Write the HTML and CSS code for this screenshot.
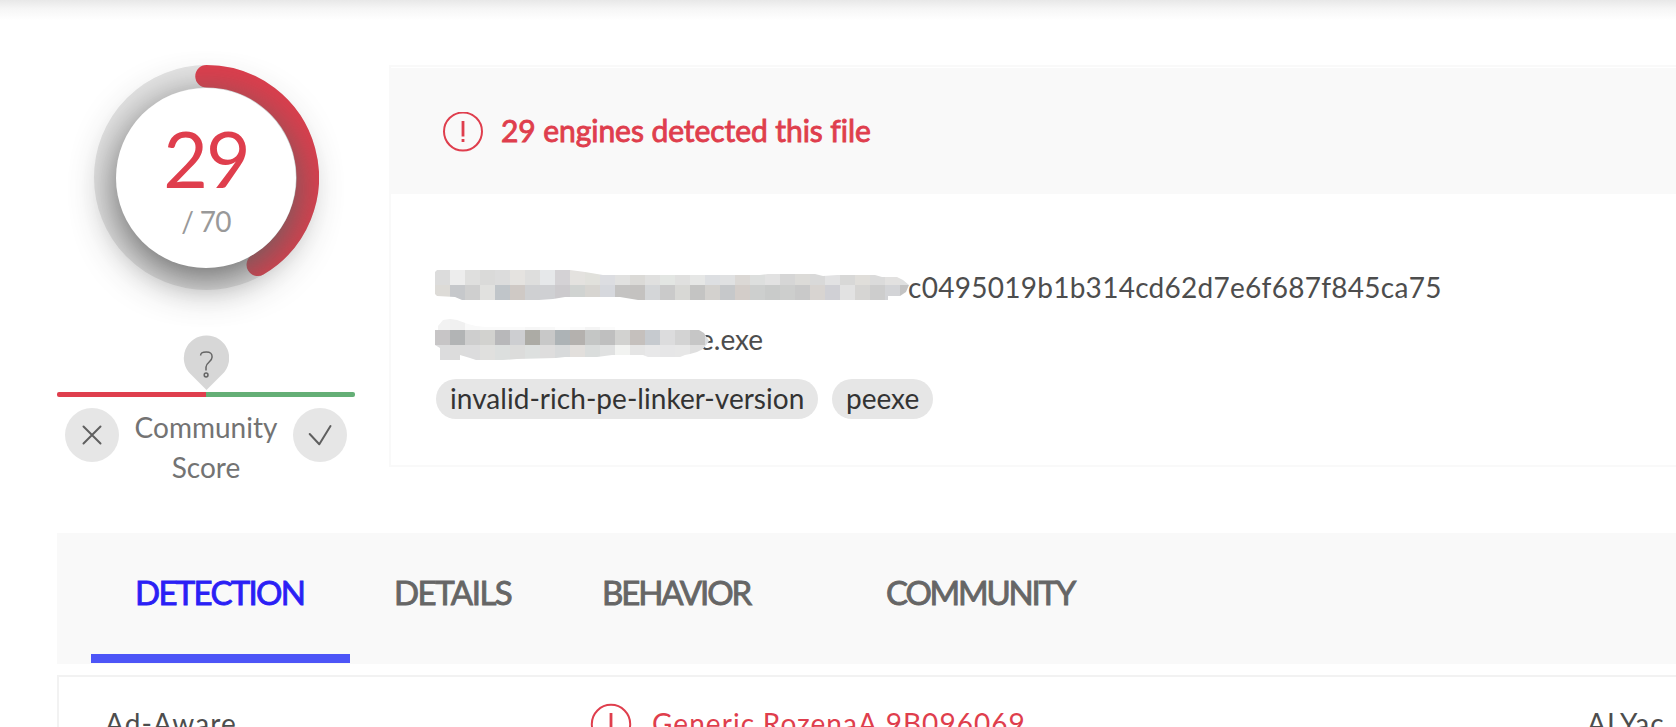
FILE: index.html
```
<!DOCTYPE html>
<html lang="en">
<head>
<meta charset="utf-8">
<title>File report</title>
<link rel="stylesheet" href="styles.css">
</head>
<body>
<div class="top-shade"></div>
<main class="page">
  <section class="summary">
    <aside class="score">
      <div class="gauge">
        <svg class="ring" width="225" height="225" viewBox="0 0 225 225">
          <circle cx="112.5" cy="112.5" r="101.25" fill="none" stroke="#e6e6e6" stroke-width="22.5"/>
          <path d="M112.5 11.25A101.25 101.25 0 0 1 163.8 199.8" fill="none" stroke="#df3e4d" stroke-width="22.5" stroke-linecap="round"/>
        </svg>
        <div class="dial">
          <span class="positives">29</span>
          <span class="total">/ 70</span>
        </div>
      </div>
      <svg class="pin" width="46" height="56" viewBox="0 0 46 56">
        <path d="M23.500 .5A22.500 22.500 0 0 1 39.500 39L23.500 55L7.500 39A22.500 22.500 0 0 1 23.500 .5Z" fill="#d7d7d7"/>
        <path d="M17.600 20.500C17.600 18 18.800 17 23.300 17C27.800 17 29.100 18.500 29.100 22C29.100 27 23 27.500 23 32V35.500" fill="none" stroke="#666" stroke-width="1.500"/>
        <circle cx="23.100" cy="40" r="1.900" fill="none" stroke="#666" stroke-width="1.500"/>
      </svg>
      <div class="bar"><span class="bad"></span><span class="good"></span></div>
      <div class="votes">
        <span class="vote"><svg width="54" height="54" viewBox="0 0 54 54"><path d="M18.500 18.500L35.500 35.500M35.500 18.500L18.500 35.500" fill="none" stroke="#5f5f5f" stroke-width="2" stroke-linecap="round"/></svg></span>
        <span class="votes-label">Community<br>Score</span>
        <span class="vote"><svg width="54" height="54" viewBox="0 0 54 54"><path d="M16.700 26L26.300 36.300L37.500 18" fill="none" stroke="#5f5f5f" stroke-width="2" stroke-linecap="round" stroke-linejoin="round"/></svg></span>
      </div>
    </aside>
    <article class="card">
      <header class="verdict">
        <svg width="40" height="40" viewBox="0 0 40 40"><circle cx="20" cy="19.500" r="19" fill="none" stroke="#df3e4d" stroke-width="2"/><path d="M20 9V24.500M20 27V30" fill="none" stroke="#df3e4d" stroke-width="2.800"/></svg>
        <span class="verdict-text">29 engines detected this file</span>
      </header>
      <div class="file">
        <div class="line"><span class="hash">c0495019b1b314cd62d7e6f687f845ca75</span>
          <svg class="mosaic" width="476" height="30" viewBox="0 0 476 30" shape-rendering="crispEdges">
            <clipPath id="m1"><path d="M0 2L2 0H135L150 2L168 5H325L333 4H380L388 6L402 5H440L447 7H462L468 10L474 15L471 22L465 26H453V30H203L185 27H130L118 29L104 30H27L20 27L2 26L0 24Z"/></clipPath>
            <g id="hash-mask" clip-path="url(#m1)"></g>
          </svg>
        </div>
        <div class="line"><span class="name">e.exe</span>
          <svg class="mosaic mosaic-name" width="276" height="46" viewBox="0 0 276 46" shape-rendering="crispEdges">
            <clipPath id="m2"><path d="M0 15H3V11L8 5L15 4L22 5L33 9L41 11L50 12H180V15H264L269 18L274 26L272 29L268 34L262 37L255 39L250 40L245 42H213L208 40H177L162 42H130L121 43L82 44L68 45H41L35 43L25 40V45H5V33L0 30Z"/></clipPath>
            <g id="name-mask" clip-path="url(#m2)"></g>
          </svg>
        </div>
        <div class="tags"><span class="tag tag-linker">invalid-rich-pe-linker-version</span><span class="tag tag-pe">peexe</span></div>
      </div>
    </article>
  </section>
  <nav class="tabs">
    <a class="tab active">DETECTION</a>
    <a class="tab details">DETAILS</a>
    <a class="tab behavior">BEHAVIOR</a>
    <a class="tab community">COMMUNITY</a>
  </nav>
  <section class="results">
    <span class="engine">Ad-Aware</span>
    <svg class="alert" width="42" height="42" viewBox="0 0 42 42"><circle cx="21" cy="21" r="19.200" fill="none" stroke="#df3e4d" stroke-width="2"/><path d="M21 10V26M21 28.500V31.500" fill="none" stroke="#df3e4d" stroke-width="2.800"/></svg>
    <span class="threat">Generic.RozenaA.9B096069</span>
    <span class="engine second">ALYac</span>
  </section>
</main>
<script src="mosaic.js"></script>
</body>
</html>
```
FILE: styles.css
```
* { box-sizing: border-box; }
body {
  margin: 0;
  height: 727px;
  overflow: hidden;
  background: #fff;
  color: #4d4d4d;
  font-family: Lato, "Open Sans", sans-serif;
  font-size: 28px;
}
svg { display: block; flex: none; }
.top-shade { height: 20px; background: linear-gradient(#e8e8e8, #f6f6f6 45%, #fff); }
.page { padding: 45px 0 0 57px; height: 707px; overflow: hidden; }
.summary { display: flex; height: 468px; }
.score { width: 298px; margin-right: 34px; display: flex; flex-direction: column; align-items: center; }
.gauge { display: grid; place-items: center; width: 225px; height: 225px; }
.ring, .dial { grid-area: 1 / 1; }
.dial {
  width: 180px;
  height: 180px;
  border-radius: 50%;
  background: #fff;
  box-shadow: 0 11px 42px rgb(100, 100, 100), 0 11px 70px rgba(0, 0, 0, .06);
  display: flex;
  flex-direction: column;
  align-items: center;
}
.positives { margin-top: 34px; font-size: 77px; line-height: 72px; color: #df3e4d; letter-spacing: -2px; }
.total { line-height: 34px; color: #999; font-size: 28px; margin-top: 10px; letter-spacing: -.7px; }
.pin { margin-top: 45px; }
.bar { display: flex; width: 298px; height: 5px; margin-top: 1px; border-radius: 2px; overflow: hidden; }
.bad, .good { flex: 1; background: #df3e4d; }
.good { background: #64af76; }
.votes { display: flex; width: 282px; margin-top: 11px; justify-content: space-between; }
.vote { width: 54px; height: 54px; border-radius: 50%; background: #e6e6e6; }
.votes-label { margin-top: -1px; color: #737373; line-height: 40px; text-align: center; font-size: 28px; }
.card { flex: 1; height: 402px; border: 2px solid #f9f9f9; border-right: 0; }
.verdict { display: flex; align-items: center; height: 126px; margin-top: 1px; padding: 2px 0 0 52px; background: #f9f9f9; color: #df3e4d; }
.verdict-text { margin: -5px 0 0 18px; font-size: 30px; line-height: 36px; letter-spacing: -.06px; -webkit-text-stroke: .9px #df3e4d; }
.file { padding: 66px 0 0 44px; }
.line { position: relative; height: 52px; line-height: 54px; white-space: nowrap; }
.hash { margin-left: 473px; letter-spacing: .27px; }
.name { margin-left: 264px; }
.mosaic { position: absolute; left: 0; top: 10px; }
.mosaic-name { top: 3px; }
.tags { display: flex; gap: 14px; margin: 15px 0 0 1px; }
.tag { height: 40px; padding-left: 14px; border-radius: 20px; background: #e6e6e6; color: #333; line-height: 38px; white-space: nowrap; }
.tag-linker { width: 382px; letter-spacing: .04px; }
.tag-pe { width: 101px; }
.tabs { display: flex; height: 131px; padding-left: 34px; background: #f9f9f9; font-size: 33px; letter-spacing: -1.7px; -webkit-text-stroke: .9px; color: #666; }
.tab { display: block; flex: none; height: 130px; line-height: 119px; white-space: nowrap; }
.tab.active { width: 259px; padding-left: 44px; color: #2b1ff5; border-bottom: 9px solid #4d55f7; }
.details { width: 252px; padding-left: 44px; letter-spacing: -1.5px; }
.behavior { width: 284px; letter-spacing: -2.1px; }
.community { letter-spacing: -2.2px; }
.results { display: flex; height: 200px; margin-top: 11px; padding: 26px 0 0 46px; border: 2px solid #f2f2f2; border-right: 0; line-height: 40px; white-space: nowrap; overflow: hidden; }
.engine { flex: none; width: 485px; letter-spacing: 1.1px; }
.second { width: auto; }
.threat { flex: none; width: 955px; padding-left: 20px; color: #df3e4d; letter-spacing: 1.05px; }
```
FILE: mosaic.js
```
// Paints the pixelated blocks that cover the redacted parts of the hash and name.
function paint(id, y, colors) {
  const group = document.getElementById(id);
  colors.split(" ").forEach((color, i) => {
    const cell = document.createElementNS("http://www.w3.org/2000/svg", "rect");
    cell.setAttribute("x", i * 15);
    cell.setAttribute("y", y);
    cell.setAttribute("width", 15);
    cell.setAttribute("height", 15);
    cell.setAttribute("fill", "#" + color);
    group.appendChild(cell);
  });
}
paint("hash-mask", 0, "dcdcdc ededed dfdfde dadad9 dcdcdc e5e3e0 dededd e6e8ea d4d2d5 e4e2df e1e1dc dcdde1 e1e1e0 dbdad7 e0e0df e3e6e3 e0e0df e6e7e6 dddfe2 e0e1e2 dbd8d5 dddfde e2e2e2 d6d6d6 dcdbd8 d9d9d9 e2e2e3 d8d8d7 e0deda dbdbdb e2e1e0 dfe0e0");
paint("hash-mask", 15, "dddbd7 c6c8cb cfcfcf e1e1df c0c5c9 cfc9c5 cfd0d2 cfd0d3 cccacd d0d3d1 d7d5d1 d6d8dd c4c3c2 c4c2c0 d4d6d8 cacaca d8d8d5 c4c4c3 d3d1ce c6c8ca d3cdc9 cdcfce c9cbca cdcecd c9c9c9 d8d4d1 d0d0d5 e2e2e2 d6d5d3 cdcdcd d3d4d7 c3c3c3");
paint("name-mask", 0, "f2f2f2 f0f0f0 f9f9f9 fafafa fafafa fafafa f6f6f6 f8f8f8 fdfdfd fafafa f4f4f4 fbfbfb");
paint("name-mask", 15, "c7c5c6 b2b4b5 cecece d2d2cf b8b8ba cdced1 acaba5 c8c8c8 adb3b6 b4b1ae c4c6c5 bfbfbf d2d2d0 c5c0bd c6cacf dcdcdd d3d3d3 c6c6c6 dcdfe2");
paint("name-mask", 30, "dcdcdd dcdcdc dcdcdd e0e0de dcdfde dcdcdb dde0df dedddd d8dadb e2dfdc dadddc e0e1e1 f2f3f1 e5e5e5 e8e8e9 e6e6e7 e7e7e7 dfdfdf e4e4e4");
```
